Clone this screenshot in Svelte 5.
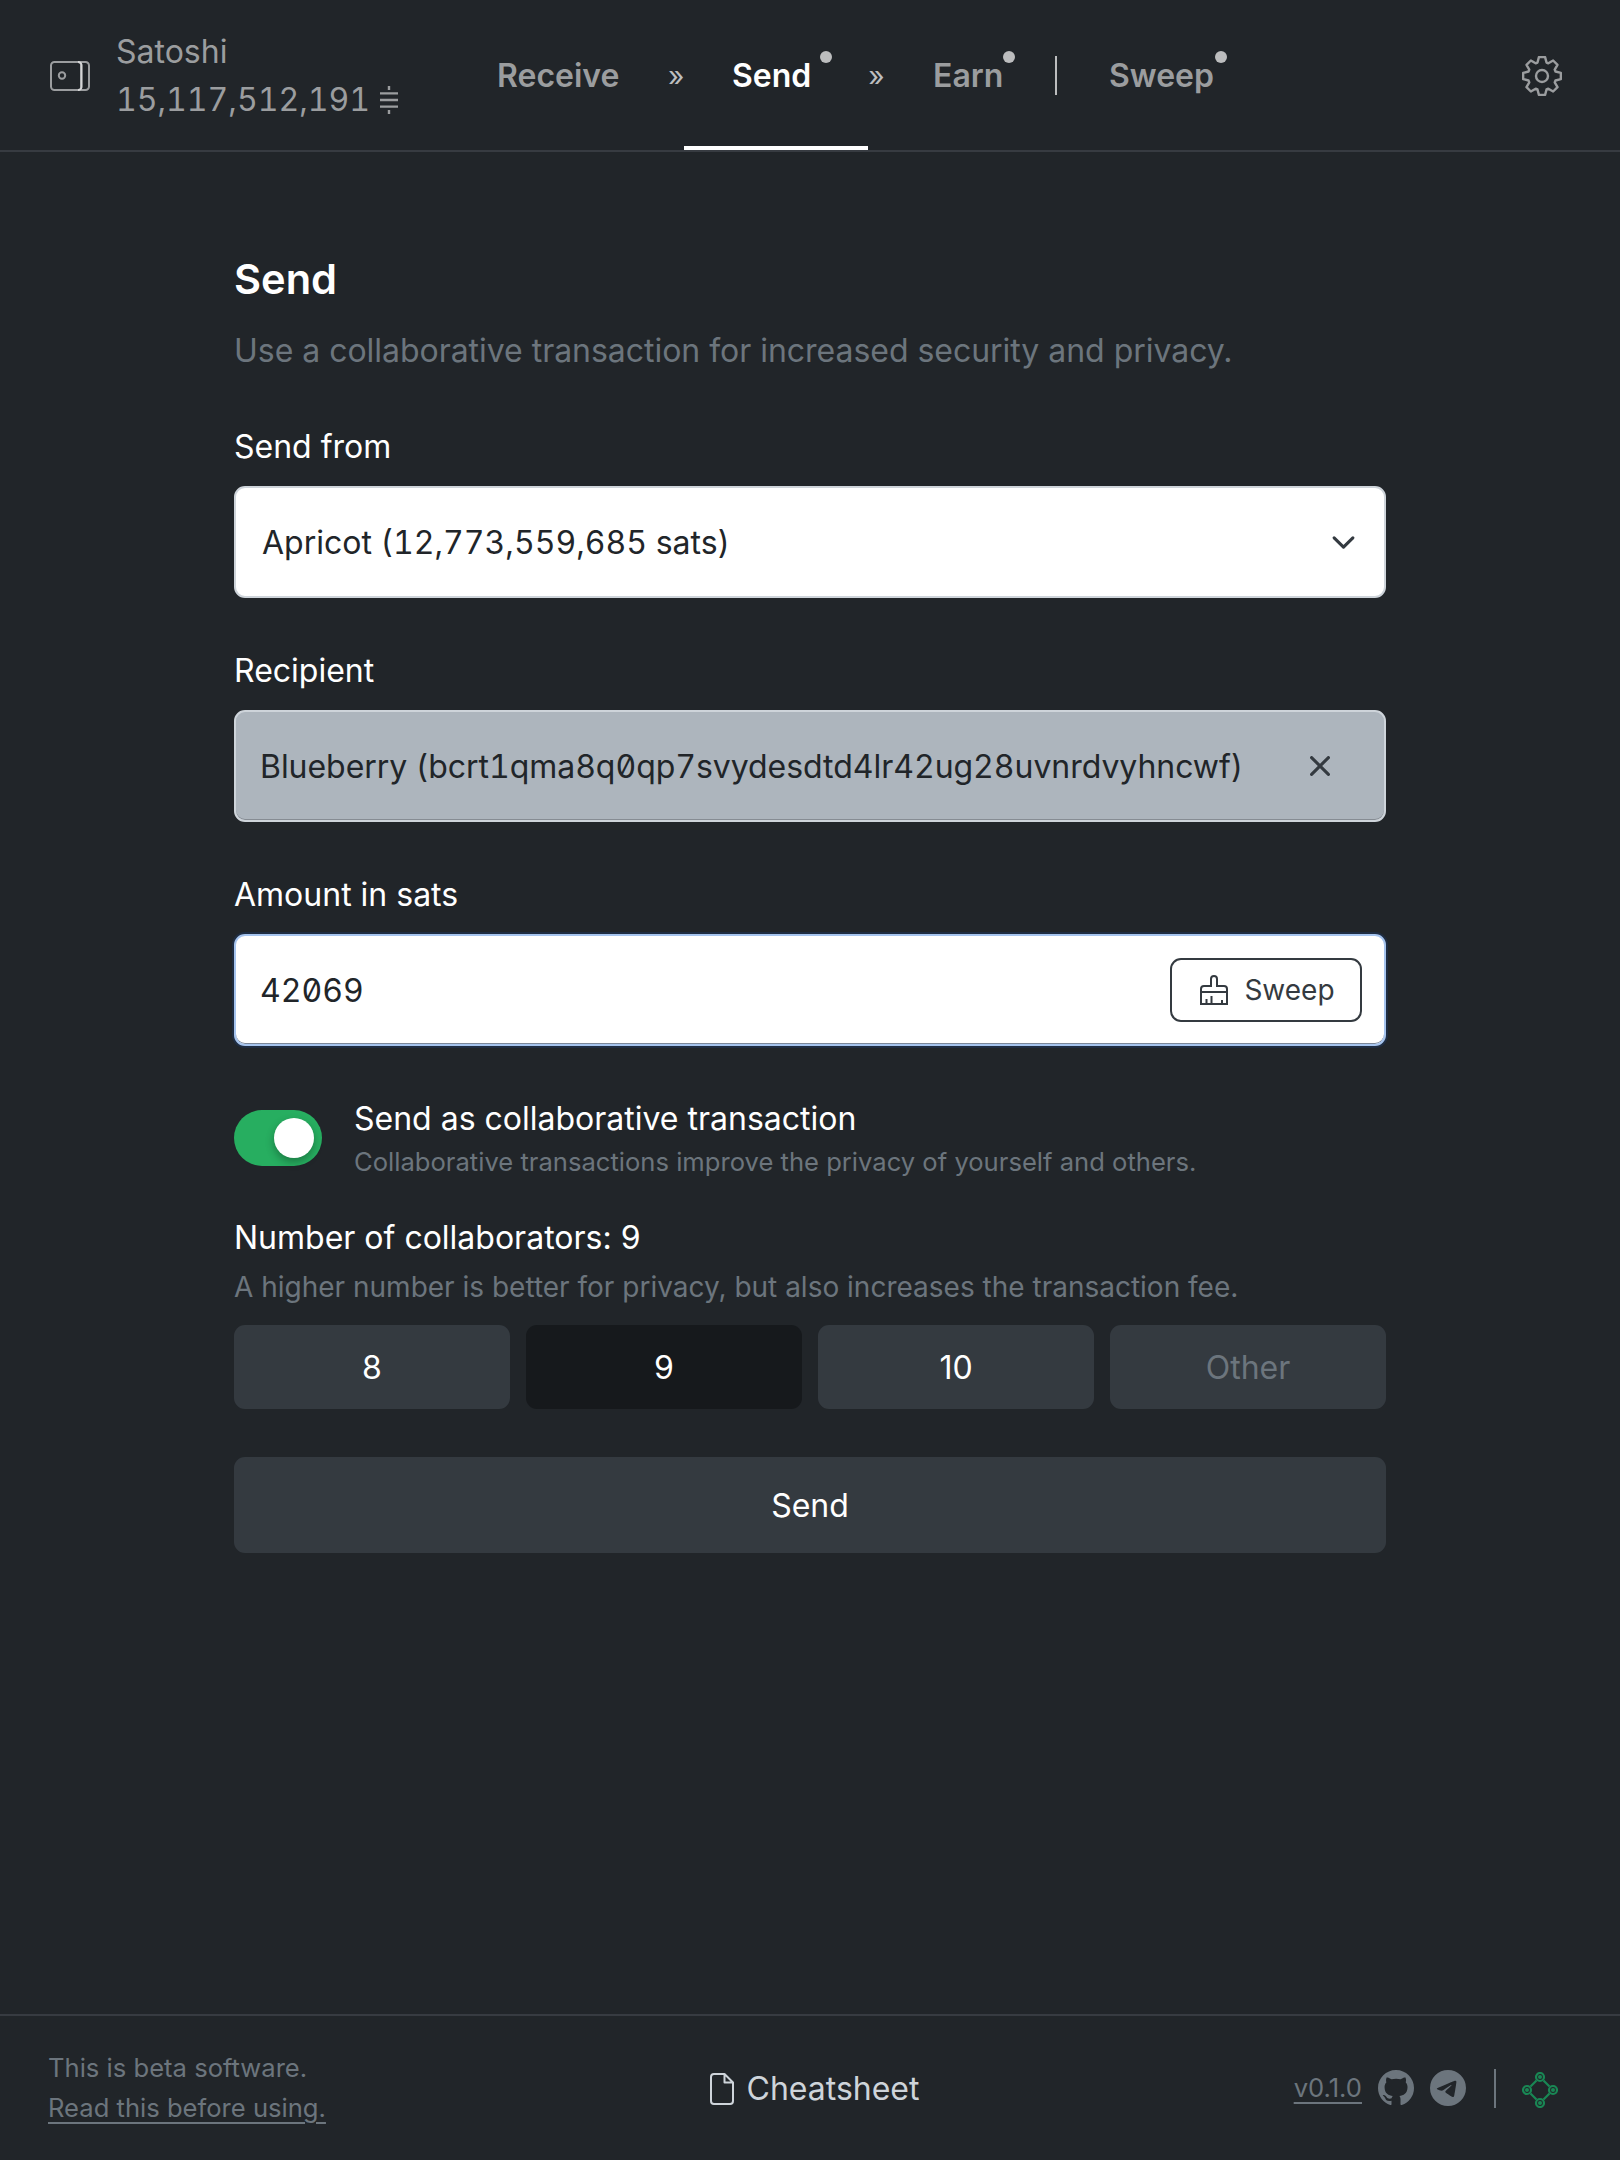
<script>
  const collaborators = [8, 9, 10];
  let selected = $state(9);

  // Outline of the eight-toothed cog, generated tooth by tooth around the centre.
  const polar = (radius, degrees) => {
    const a = (degrees * Math.PI) / 180;
    return `${(20 + radius * Math.sin(a)).toFixed(2)} ${(20 - radius * Math.cos(a)).toFixed(2)}`;
  };
  const cog = 'M' + Array.from({ length: 8 }, (_, i) => {
    const c = i * 45;
    return [polar(14.2, c - 18.5), polar(19.1, c - 9.3), polar(19.1, c + 9.3), polar(14.2, c + 18.5)].join('L');
  }).join('L') + 'Z';
</script>

<div class="page">
  <header>
    <a class="wallet" href="#wallet">
      <svg class="wallet-icon" viewBox="0 0 40 30" fill="none" stroke="currentColor" stroke-width="2">
        <rect x="1" y="1" width="30.5" height="28" rx="3.5" />
        <path d="M28 1h7.5a3.5 3.5 0 0 1 3.5 3.5v21a3.5 3.5 0 0 1-3.500 3.500H28" />
        <path class="bright" d="M28 1a3 3 0 0 1 3.300 3.500v21a3 3 0 0 1-3.300 3.500" />
        <circle cx="12" cy="14.5" r="3.2" />
      </svg>
      <span class="wallet-text">
        <span class="wallet-name">Satoshi</span>
        <span class="balance">15,117,512,191
          <svg class="sats" viewBox="0 0 18 28" stroke="currentColor" stroke-width="2.4">
            <path d="M0 7.4h18M0 14h18M0 20.6h18M9 0v4M9 24v4" />
          </svg>
        </span>
      </span>
    </a>
    <nav>
      <a class="tab receive" href="#receive">Receive</a>
      <span class="chev first">»</span>
      <a class="tab send active" href="#send">Send<i></i></a>
      <span class="chev second">»</span>
      <a class="tab earn" href="#earn">Earn<i></i></a>
      <span class="bar"></span>
      <a class="tab sweep" href="#sweep">Sweep<i></i></a>
    </nav>
    <a class="settings" href="#settings" aria-label="Settings">
      <svg viewBox="0 0 40 40" fill="none" stroke="currentColor" stroke-width="2.4" stroke-linejoin="round">
        <path d={cog} />
        <circle cx="20" cy="20" r="6" />
      </svg>
    </a>
  </header>

  <main>
    <h1>Send</h1>
    <p class="lead">Use a collaborative transaction for increased security and privacy.</p>

    <div class="field">
      <span class="label">Send from</span>
      <div class="control select">
        <span>Apricot (12,773,559,685 sats)</span>
        <svg class="caret" viewBox="0 0 16 16" fill="none" stroke="#343a40" stroke-width="2" stroke-linecap="round" stroke-linejoin="round"><path d="M2 5l6 6 6-6" /></svg>
      </div>
    </div>

    <div class="field">
      <span class="label">Recipient</span>
      <div class="control filled">
        <span>Blueberry (bcrt1qma8q0qp7svydesdtd4lr42ug28uvnrdvyhncwf)</span>
        <svg class="clear" viewBox="0 0 20 20" fill="none" stroke="#343a40" stroke-width="3.1" stroke-linecap="round"><path d="M1.600 1.600l16.800 16.800M18.400 1.600l-16.800 16.800" /></svg>
      </div>
    </div>

    <div class="field">
      <span class="label">Amount in sats</span>
      <div class="control focused">
        <span>42069</span>
        <button class="sweep-btn">
          <svg viewBox="0 0 28 30" fill="none" stroke="currentColor" stroke-width="2">
            <path d="M1 29V14a3 3 0 0 1 3-3h7V4a3 3 0 0 1 6 0v7h7a3 3 0 0 1 3 3v15zM1 17h26M6.500 29v-5M11.500 29v-8M22 29v-4" />
          </svg>
          Sweep
        </button>
      </div>
    </div>

    <div class="toggle-row">
      <span class="toggle"><span class="knob"></span></span>
      <div>
        <div class="toggle-title">Send as collaborative transaction</div>
        <div class="toggle-sub">Collaborative transactions improve the privacy of yourself and others.</div>
      </div>
    </div>

    <div class="num-title">Number of collaborators: {selected}</div>
    <div class="num-sub">A higher number is better for privacy, but also increases the transaction fee.</div>
    <div class="options">
      {#each collaborators as n}
        <button class="option" class:chosen={n === selected} onclick={() => (selected = n)}>{n}</button>
      {/each}
      <button class="option other">Other</button>
    </div>
    <button class="submit">Send</button>
  </main>

  <footer>
    <div class="beta">
      <span>This is beta software.</span>
      <a href="#warning">Read this before using.</a>
    </div>
    <a class="cheatsheet" href="#cheatsheet">
      <svg viewBox="0 0 24 32" fill="none" stroke="currentColor" stroke-width="2" stroke-linejoin="round">
        <path d="M14.500 1H4a3 3 0 0 0-3 3v24a3 3 0 0 0 3 3h16a3 3 0 0 0 3-3V9.500zM14.500 1v8.500H23" />
      </svg>
      Cheatsheet
    </a>
    <div class="links">
      <a class="version" href="#version">v0.1.0</a>
      <svg class="round" viewBox="0 0 16 16" fill="currentColor">
        <path d="M8 0C3.580 0 0 3.580 0 8c0 3.540 2.290 6.530 5.470 7.590.4.070.55-.17.55-.38 0-.19-.01-.82-.01-1.490-2.010.37-2.530-.49-2.690-.94-.09-.23-.48-.94-.82-1.130-.28-.15-.68-.52-.01-.53.63-.01 1.080.58 1.230.82.72 1.210 1.870.87 2.330.66.07-.52.28-.87.51-1.070-1.780-.2-3.640-.89-3.640-3.950 0-.87.31-1.590.82-2.150-.08-.2-.36-1.020.08-2.120 0 0 .67-.21 2.200.82.64-.18 1.320-.27 2-.27s1.360.09 2 .27c1.530-1.040 2.200-.82 2.200-.82.44 1.100.16 1.920.08 2.120.51.56.82 1.270.82 2.150 0 3.070-1.870 3.750-3.650 3.950.29.25.54.73.54 1.480 0 1.070-.01 1.930-.01 2.200 0 .21.15.46.55.38A8.010 8.010 0 0 0 16 8c0-4.420-3.580-8-8-8" />
      </svg>
      <svg class="round" viewBox="0 0 16 16" fill="currentColor">
        <path d="M16 8A8 8 0 1 1 0 8a8 8 0 0 1 16 0M8.287 5.906q-1.168.486-4.666 2.010-.567.225-.595.442c-.03.243.275.339.69.470l.175.055c.408.133.958.288 1.243.294q.39.010.868-.320 3.269-2.206 3.374-2.230c.05-.012.12-.026.166.016s.042.120.037.141c-.03.129-1.227 1.241-1.846 1.817-.193.180-.33.307-.358.336a8 8 0 0 1-.188.186c-.38.366-.664.640.015 1.088.327.216.589.393.850.571.284.194.568.387.936.629q.14.092.270.187c.331.236.630.448.997.414.214-.020.435-.220.547-.820.265-1.417.786-4.486.906-5.751a1.400 1.400 0 0 0-.013-.315.340.340 0 0 0-.114-.217.530.530 0 0 0-.310-.093c-.300.005-.763.166-2.984 1.090" />
      </svg>
      <span class="rule"></span>
      <svg class="network" viewBox="0 0 36 36" fill="none" stroke="#198754" stroke-width="2.2">
        <path d="M14.500 8.500l-6 6M21.500 8.500l6 6M8.500 21.500l6 6M27.500 21.500l-6 6" />
        <circle cx="18" cy="5" r="4" /><circle cx="18" cy="31" r="4" /><circle cx="5" cy="18" r="4" /><circle cx="31" cy="18" r="4" />
        <g fill="#198754" stroke="none"><circle cx="18" cy="5" r="2" /><circle cx="18" cy="31" r="2" /><circle cx="5" cy="18" r="2" /><circle cx="31" cy="18" r="2" /></g>
      </svg>
    </div>
  </footer>
</div>

<style>
  :global(body) { background: #212529; }
  .page {
    display: flex; flex-direction: column; box-sizing: border-box; width: 1620px; height: 2160px;
    background: #212529; color: #fff; font: 400 32px/48px Inter, "Liberation Sans", sans-serif;
  }
  .page * { box-sizing: border-box; }
  a { color: inherit; text-decoration: none; }
  svg { display: block; flex: none; }
  button { font: inherit; color: inherit; border: 0; padding: 0; }

  header { display: flex; height: 152px; border-bottom: 2px solid #373b41; color: #9b9d9f; }
  .wallet { display: flex; align-items: center; width: 440px; padding: 2px 0 0 50px; }
  .wallet-icon { width: 40px; height: 30px; }
  .bright { stroke: #d5d6d7; }
  .wallet-text { display: flex; flex-direction: column; margin-left: 26px; }
  .balance { display: flex; align-items: center; font-feature-settings: "tnum"; }
  .sats { width: 18px; height: 28px; margin-left: 10px; }
  nav { display: flex; align-items: center; flex: 1; }
  .tab { position: relative; display: flex; align-items: center; height: 150px; padding-top: 2px; font-weight: 600; white-space: nowrap; }
  .tab i { position: absolute; top: 51px; width: 12px; height: 12px; border-radius: 50%; background: #bcbdbe; }
  .receive { width: 184px; padding-left: 57px; }
  .chev { width: 60px; padding-top: 2px; text-align: center; color: #bcbdbe; font-size: 28px; }
  .chev.first { padding-left: 44px; }
  .chev.second { width: 17px; }
  .send { width: 184px; padding-left: 48px; border-bottom: 4px solid #fff; padding-top: 6px; color: #fff; }
  .send i { left: 136px; }
  .earn { width: 170px; padding-left: 48px; }
  .earn i { left: 118px; }
  .bar { width: 2px; height: 39px; background: #bcbdbe; }
  .sweep { width: 200px; padding-left: 52px; }
  .sweep i { left: 158px; }
  .settings { display: flex; align-items: center; margin-right: 58px; padding-top: 2px; }
  .settings svg { width: 40px; height: 40px; }

  main { display: flex; flex-direction: column; flex: 1; width: 1152px; margin: 0 auto; padding-top: 102px; }
  h1 { margin: 0 0 23px; font-size: 41.6px; line-height: 50px; font-weight: 600; }
  .lead { margin: 0 0 48px; color: #6c757d; letter-spacing: -0.03px; }
  .field { display: flex; flex-direction: column; gap: 15px; margin-bottom: 49px; }
  .control {
    display: flex; align-items: center; justify-content: space-between; height: 112px; padding: 0 26px 0 24px;
    border: 2px solid #ced4da; border-radius: 11px; background: #fff; color: #212529;
    font-feature-settings: "tnum", "zero"; white-space: nowrap;
  }
  .control > span { padding-top: 2px; }
  .select { padding: 0 28px 0 26px; }
  .caret { width: 25px; height: 25px; }
  .filled { background: #adb5bd; padding-right: 54px; box-shadow: inset 0 -1px 0 #868c93; }
  .filled > span { letter-spacing: -0.04px; }
  .clear { width: 20px; height: 20px; }
  .focused { border-color: #a6c4ee; box-shadow: 0 0 0 2px #1f2d42, inset 0 -1px 0 #7b8798; padding-right: 22px; }
  .sweep-btn {
    display: flex; align-items: center; justify-content: center; gap: 16px; width: 192px; height: 64px; padding-left: 3px;
    border: 2px solid #343a40; border-radius: 11px; background: #fff; color: #343a40; font-size: 28px;
  }
  .sweep-btn svg { width: 28px; height: 30px; }

  .toggle-row { display: flex; align-items: center; gap: 32px; height: 88px; margin-top: -1px; }
  .toggle { display: flex; justify-content: flex-end; width: 88px; height: 56px; padding: 8px; border-radius: 28px; background: #27ae60; }
  .knob { width: 40px; height: 40px; border-radius: 50%; background: #fff; box-shadow: 0 4px 8px rgba(0, 0, 0, .3); }
  .toggle-sub { color: #6c757d; font-size: 25.6px; line-height: 38.4px; }
  .num-title { margin-top: 32px; }
  .num-sub { margin-top: 4px; color: #6c757d; font-size: 28px; line-height: 42px; }
  .options { display: grid; grid-template-columns: repeat(4, 1fr); gap: 16px; margin-top: 17px; }
  .option { height: 84px; padding-top: 2px; border-radius: 11px; background: #343a40; }
  .chosen { background: #16191c; }
  .other { color: #6c757d; }
  .submit { height: 96px; margin-top: 48px; padding-top: 2px; border-radius: 11px; background: #343a40; }

  footer { display: grid; grid-template-columns: 1fr auto 1fr; align-items: center; height: 146px; border-top: 2px solid #373b41; padding: 0 62px 0 48px; }
  .beta { display: flex; flex-direction: column; align-items: flex-start; color: #6c757d; font-size: 25.6px; line-height: 40px; }
  .beta a, .version { text-decoration: underline; text-decoration-thickness: 2px; text-underline-offset: 5px; }
  .cheatsheet { display: flex; align-items: center; gap: 13px; margin-left: 23px; padding-top: 2px; color: #ced4da; }
  .cheatsheet svg { width: 24px; height: 32px; }
  .links { display: flex; align-items: center; justify-content: flex-end; color: #6c757d; font-size: 25.6px; }
  .round { width: 36px; height: 36px; margin-left: 16px; }
  .rule { width: 2px; height: 39px; margin: 0 26px 0 28px; background: #6c757d; }
  .network { width: 36px; height: 36px; margin-top: 3px; }
</style>
